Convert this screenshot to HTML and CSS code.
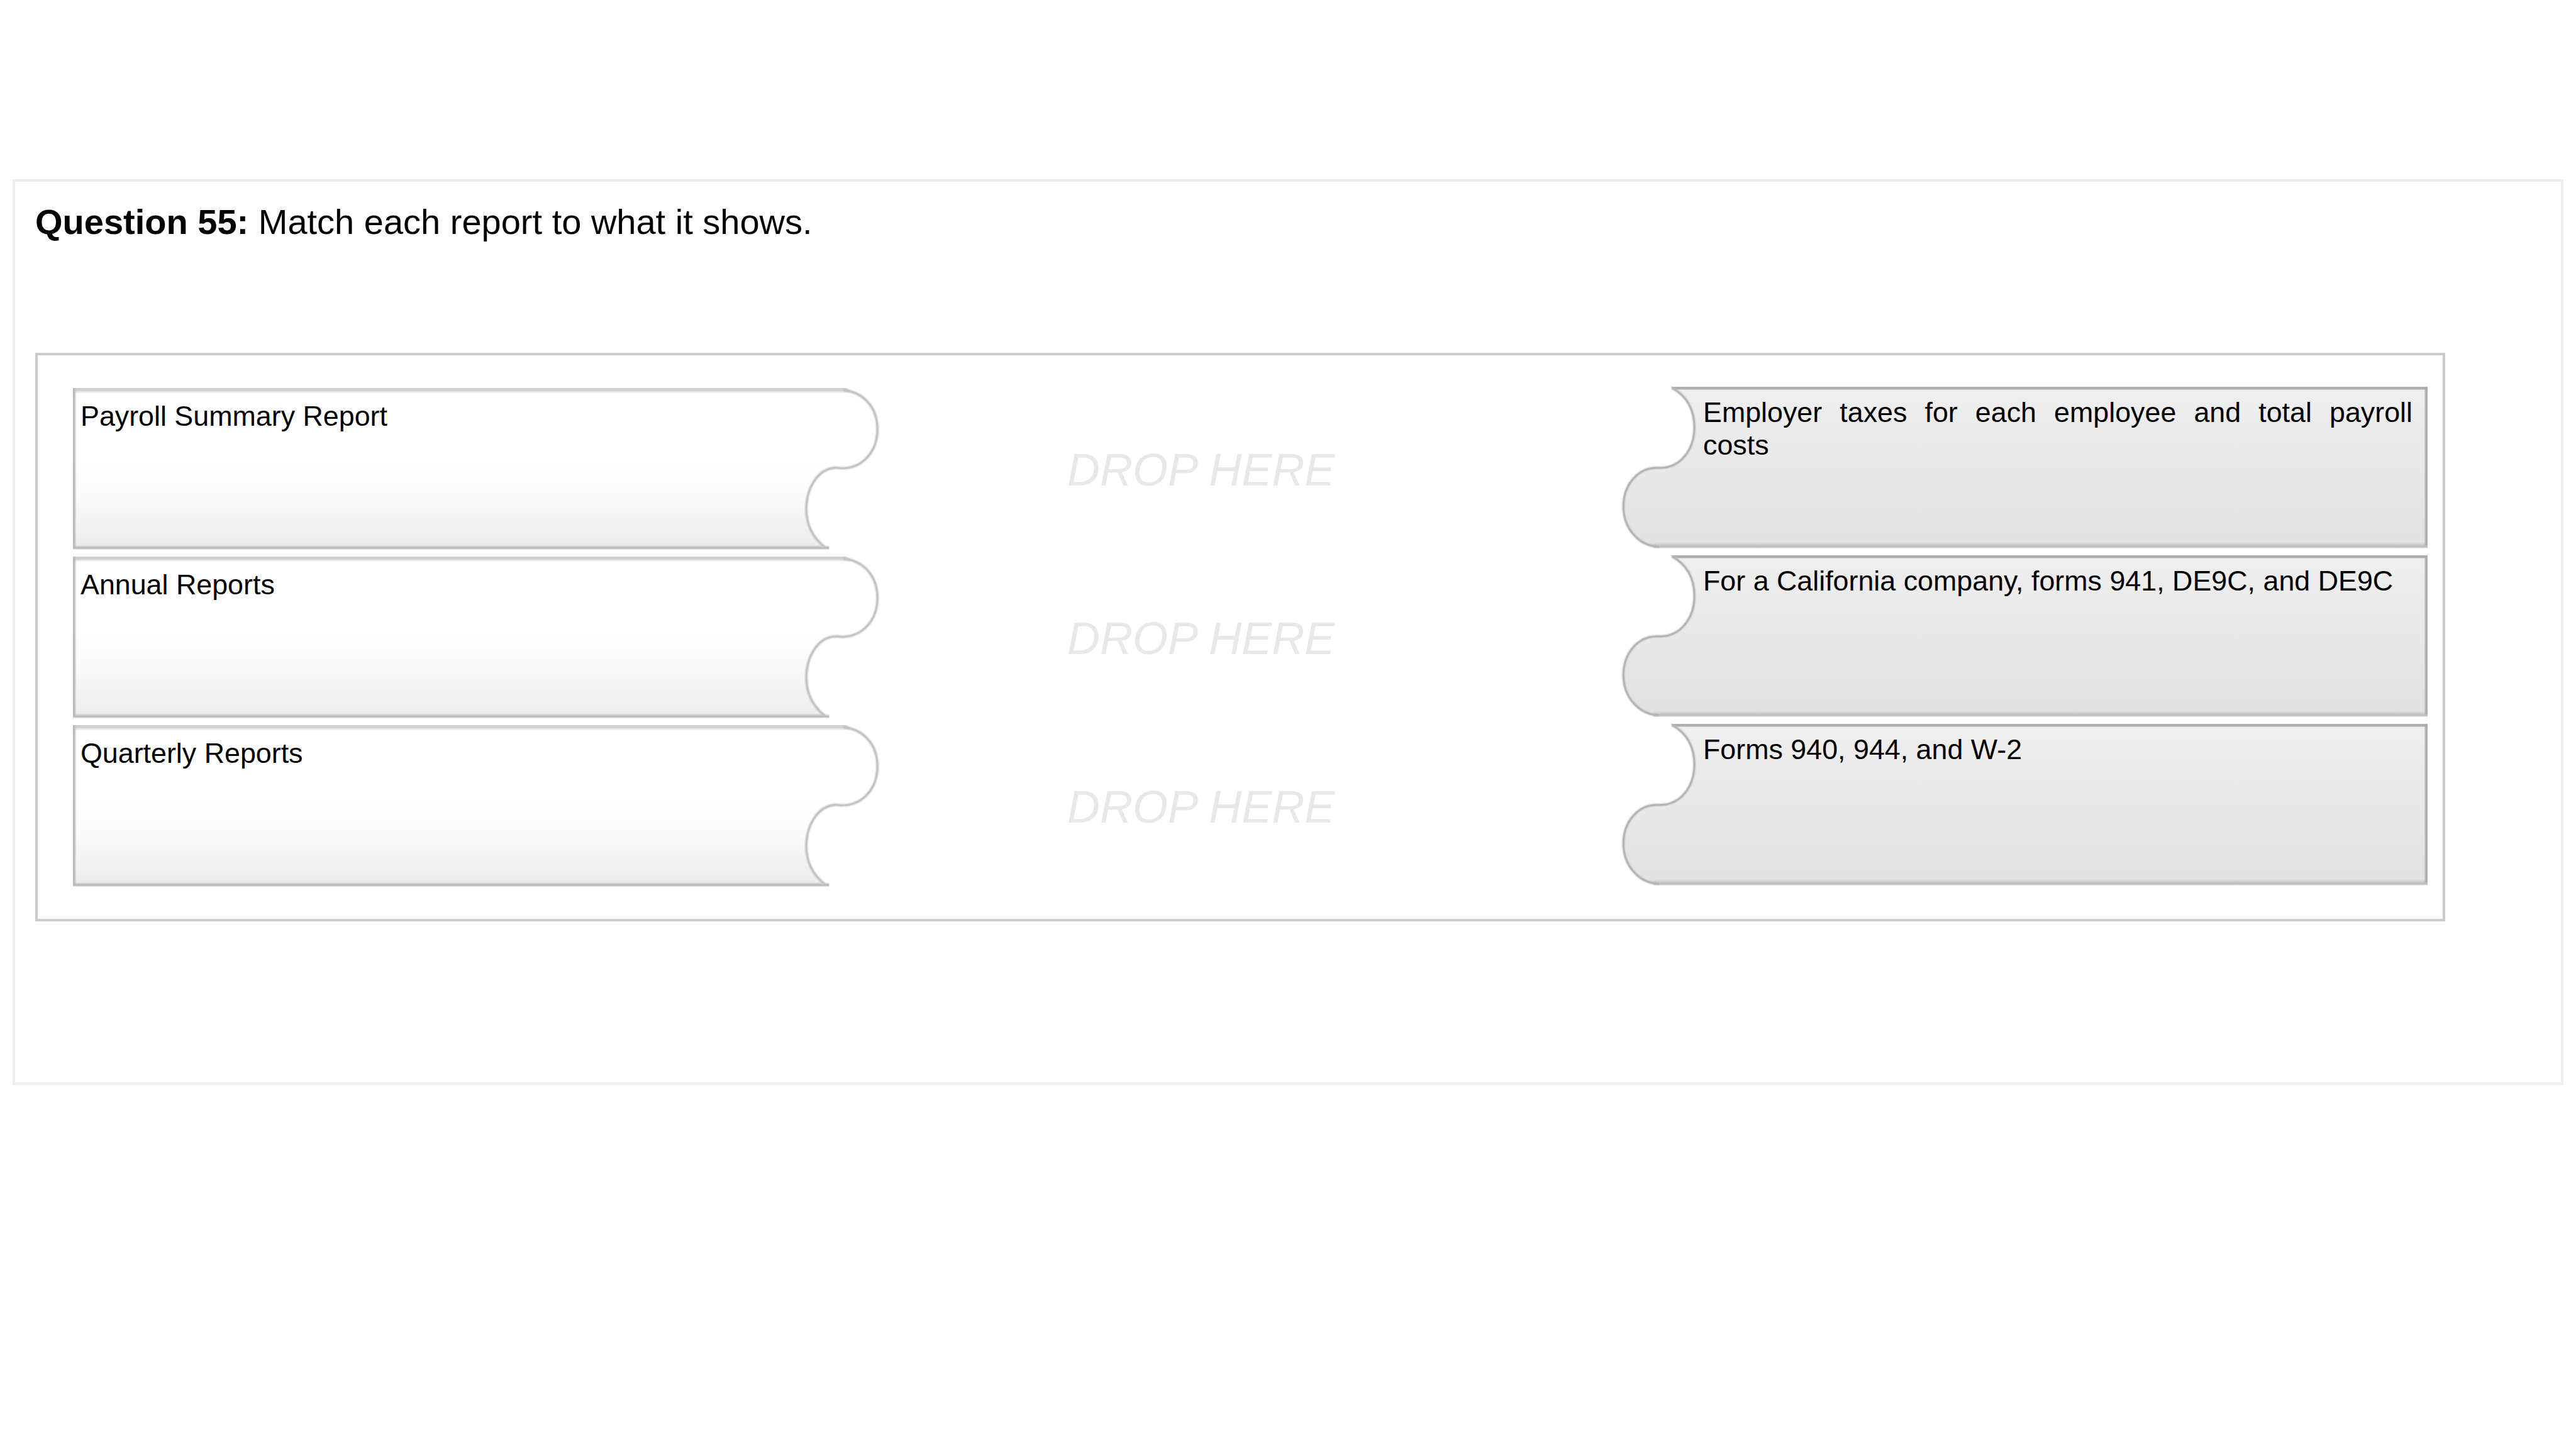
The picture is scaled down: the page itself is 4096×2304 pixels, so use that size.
FILE: index.html
```html
<!DOCTYPE html>
<html lang="en">
<head>
<meta charset="utf-8">
<title>Question 55</title>
<link rel="stylesheet" href="styles.css">
</head>
<body>
<svg class="defs" width="0" height="0" aria-hidden="true">
  <defs>
    <linearGradient id="light" x1="0" y1="0" x2="0" y2="322" gradientUnits="userSpaceOnUse">
      <stop offset="0.45" stop-color="#fff"/><stop offset="0.62" stop-color="#fcfcfc"/><stop offset="1" stop-color="#ebebeb"/>
    </linearGradient>
    <linearGradient id="dark" x1="0" y1="0" x2="0" y2="322" gradientUnits="userSpaceOnUse">
      <stop offset="0" stop-color="#efefef"/><stop offset="1" stop-color="#e1e1e1"/>
    </linearGradient>
    <linearGradient id="light-top" x1="0" y1="0" x2="0" y2="1">
      <stop offset="0" stop-color="#ccc"/><stop offset="0.42" stop-color="#d0d0d0"/><stop offset="1" stop-color="#fff"/>
    </linearGradient>
    <linearGradient id="light-side" x1="0" y1="0" x2="1" y2="0">
      <stop offset="0" stop-color="#b8b8b8"/><stop offset="0.42" stop-color="#bdbdbd"/><stop offset="1" stop-color="#bdbdbd" stop-opacity="0"/>
    </linearGradient>
    <linearGradient id="light-bottom" x1="0" y1="0" x2="0" y2="1">
      <stop offset="0" stop-color="#b8b8b8" stop-opacity="0.1"/><stop offset="0.5" stop-color="#b8b8b8"/><stop offset="0.62" stop-color="#b8b8b8"/><stop offset="1" stop-color="#b8b8b8" stop-opacity="0"/>
    </linearGradient>
    <linearGradient id="dark-top" x1="0" y1="0" x2="0" y2="1">
      <stop offset="0" stop-color="#adadad"/><stop offset="0.6" stop-color="#adadad"/><stop offset="1" stop-color="#adadad" stop-opacity="0"/>
    </linearGradient>
    <linearGradient id="dark-side" x1="1" y1="0" x2="0" y2="0">
      <stop offset="0" stop-color="#adadad"/><stop offset="0.5" stop-color="#adadad"/><stop offset="1" stop-color="#adadad" stop-opacity="0"/>
    </linearGradient>
    <linearGradient id="dark-bottom" x1="0" y1="0" x2="0" y2="1">
      <stop offset="0" stop-color="#c0c0c0" stop-opacity="0"/><stop offset="0.62" stop-color="#c0c0c0"/><stop offset="0.75" stop-color="#c0c0c0"/><stop offset="1" stop-color="#c0c0c0" stop-opacity="0"/>
    </linearGradient>
    <path id="tab-edge" d="M1532 4C1573 9 1599 40 1599 82C1599 126 1570 159.5 1528 159.5L1519 158.5C1480 158 1457.7 200 1457.7 240.7C1457.7 275 1474 300 1494 316"/>
    <path id="socket-edge" d="M103 2C132 18 147.7 45 147.7 81C147.7 125 120 160 82 161L73 161C35 161 6.7 195 6.7 238C6.7 282 38 317.5 78 317.5"/>
  </defs>
  <symbol id="prompt-shape" viewBox="0 0 1605 322">
    <path fill="url(#light)" d="M0 0H1532V4C1573 9 1599 40 1599 82C1599 126 1570 159.5 1528 159.5L1519 158.5C1480 158 1457.7 200 1457.7 240.7C1457.7 275 1474 300 1494 316H0Z"/>
    <path fill="url(#light-top)" d="M0 0H1536L1548 6L1546 11H0Z"/>
    <rect fill="url(#light-side)" width="7" height="318"/>
    <rect fill="url(#light-bottom)" y="312.5" width="1503" height="9.5"/>
    <use href="#tab-edge" class="edge-soft"/><use href="#tab-edge" class="edge"/>
  </symbol>
  <symbol id="answer-shape" viewBox="0 0 1605 322">
    <path fill="url(#dark)" d="M1605 0H103V2C132 18 147.7 45 147.7 81C147.7 125 120 160 82 161L73 161C35 161 6.7 195 6.7 238C6.7 282 38 317.5 78 317.5H1605Z"/>
    <rect fill="url(#dark-bottom)" x="66" y="309" width="1539" height="13"/>
    <path fill="url(#dark-top)" d="M101 0H1605V7H112Z"/>
    <rect fill="url(#dark-side)" x="1598" width="7" height="316"/>
    <use href="#socket-edge" class="edge-soft"/><use href="#socket-edge" class="edge edge-dark"/>
  </symbol>
</svg>

<main class="question">
  <h1 class="title"><b>Question 55:</b> Match each report to what it shows.</h1>
  <section class="board">
    <div class="row">
      <div class="piece prompt"><svg class="shape"><use href="#prompt-shape"/></svg><p class="label">Payroll Summary Report</p></div>
      <div class="drop">DROP HERE</div>
      <div class="piece answer"><svg class="shape"><use href="#answer-shape"/></svg><p class="label">Employer taxes for each employee and total payroll costs</p></div>
    </div>
    <div class="row">
      <div class="piece prompt"><svg class="shape"><use href="#prompt-shape"/></svg><p class="label">Annual Reports</p></div>
      <div class="drop">DROP HERE</div>
      <div class="piece answer"><svg class="shape"><use href="#answer-shape"/></svg><p class="label">For a California company, forms 941, DE9C, and DE9C</p></div>
    </div>
    <div class="row">
      <div class="piece prompt"><svg class="shape"><use href="#prompt-shape"/></svg><p class="label">Quarterly Reports</p></div>
      <div class="drop">DROP HERE</div>
      <div class="piece answer"><svg class="shape"><use href="#answer-shape"/></svg><p class="label">Forms 940, 944, and W-2</p></div>
    </div>
  </section>
</main>
</body>
</html>
```
FILE: styles.css
```css
* {
  box-sizing: border-box;
}

body {
  margin: 0;
  padding: 285px 20px 0;
  background: #fff;
  color: #000;
  font-family: "Liberation Sans", Arial, Helvetica, sans-serif;
}

.defs {
  position: absolute;
}

.question {
  height: 1440px;
  padding: 32px;
  border: 4px solid #eee;
}

.title {
  margin: 0 0 176px;
  font-size: 56px;
  font-weight: 400;
  line-height: 64px;
}

.board {
  width: 3832px;
  height: 904px;
  padding: 50px 24px 0 56px;
  border: 4px solid #ccc;
}

.row {
  display: grid;
  grid-template-columns: 1284px 1fr 1284px;
  height: 268px;
}

.piece {
  display: grid;
  align-items: start;
}

.shape,
.label {
  grid-area: 1 / 1;
}

.shape {
  display: block;
  width: 1284px;
  height: 257.6px;
}

.label {
  margin: 0;
  font-size: 44.8px;
  line-height: 51.5px;
}

.prompt {
  padding-top: 2px;
}

.prompt .label {
  padding: 18.5px 160px 0 12px;
}

.answer .label {
  padding: 15px 24px 0 132px;
  text-align: justify;
}

.drop {
  padding: 90px 0 0 297px;
  color: #e8e8e8;
  font-size: 72px;
  font-style: italic;
  line-height: 84px;
}

.edge,
.edge-soft {
  fill: none;
  stroke: #c4c4c4;
  stroke-width: 4px;
}

.edge-dark {
  stroke: #b5b5b5;
}

.edge-soft {
  stroke-width: 8px;
  opacity: 0.35;
}
```
